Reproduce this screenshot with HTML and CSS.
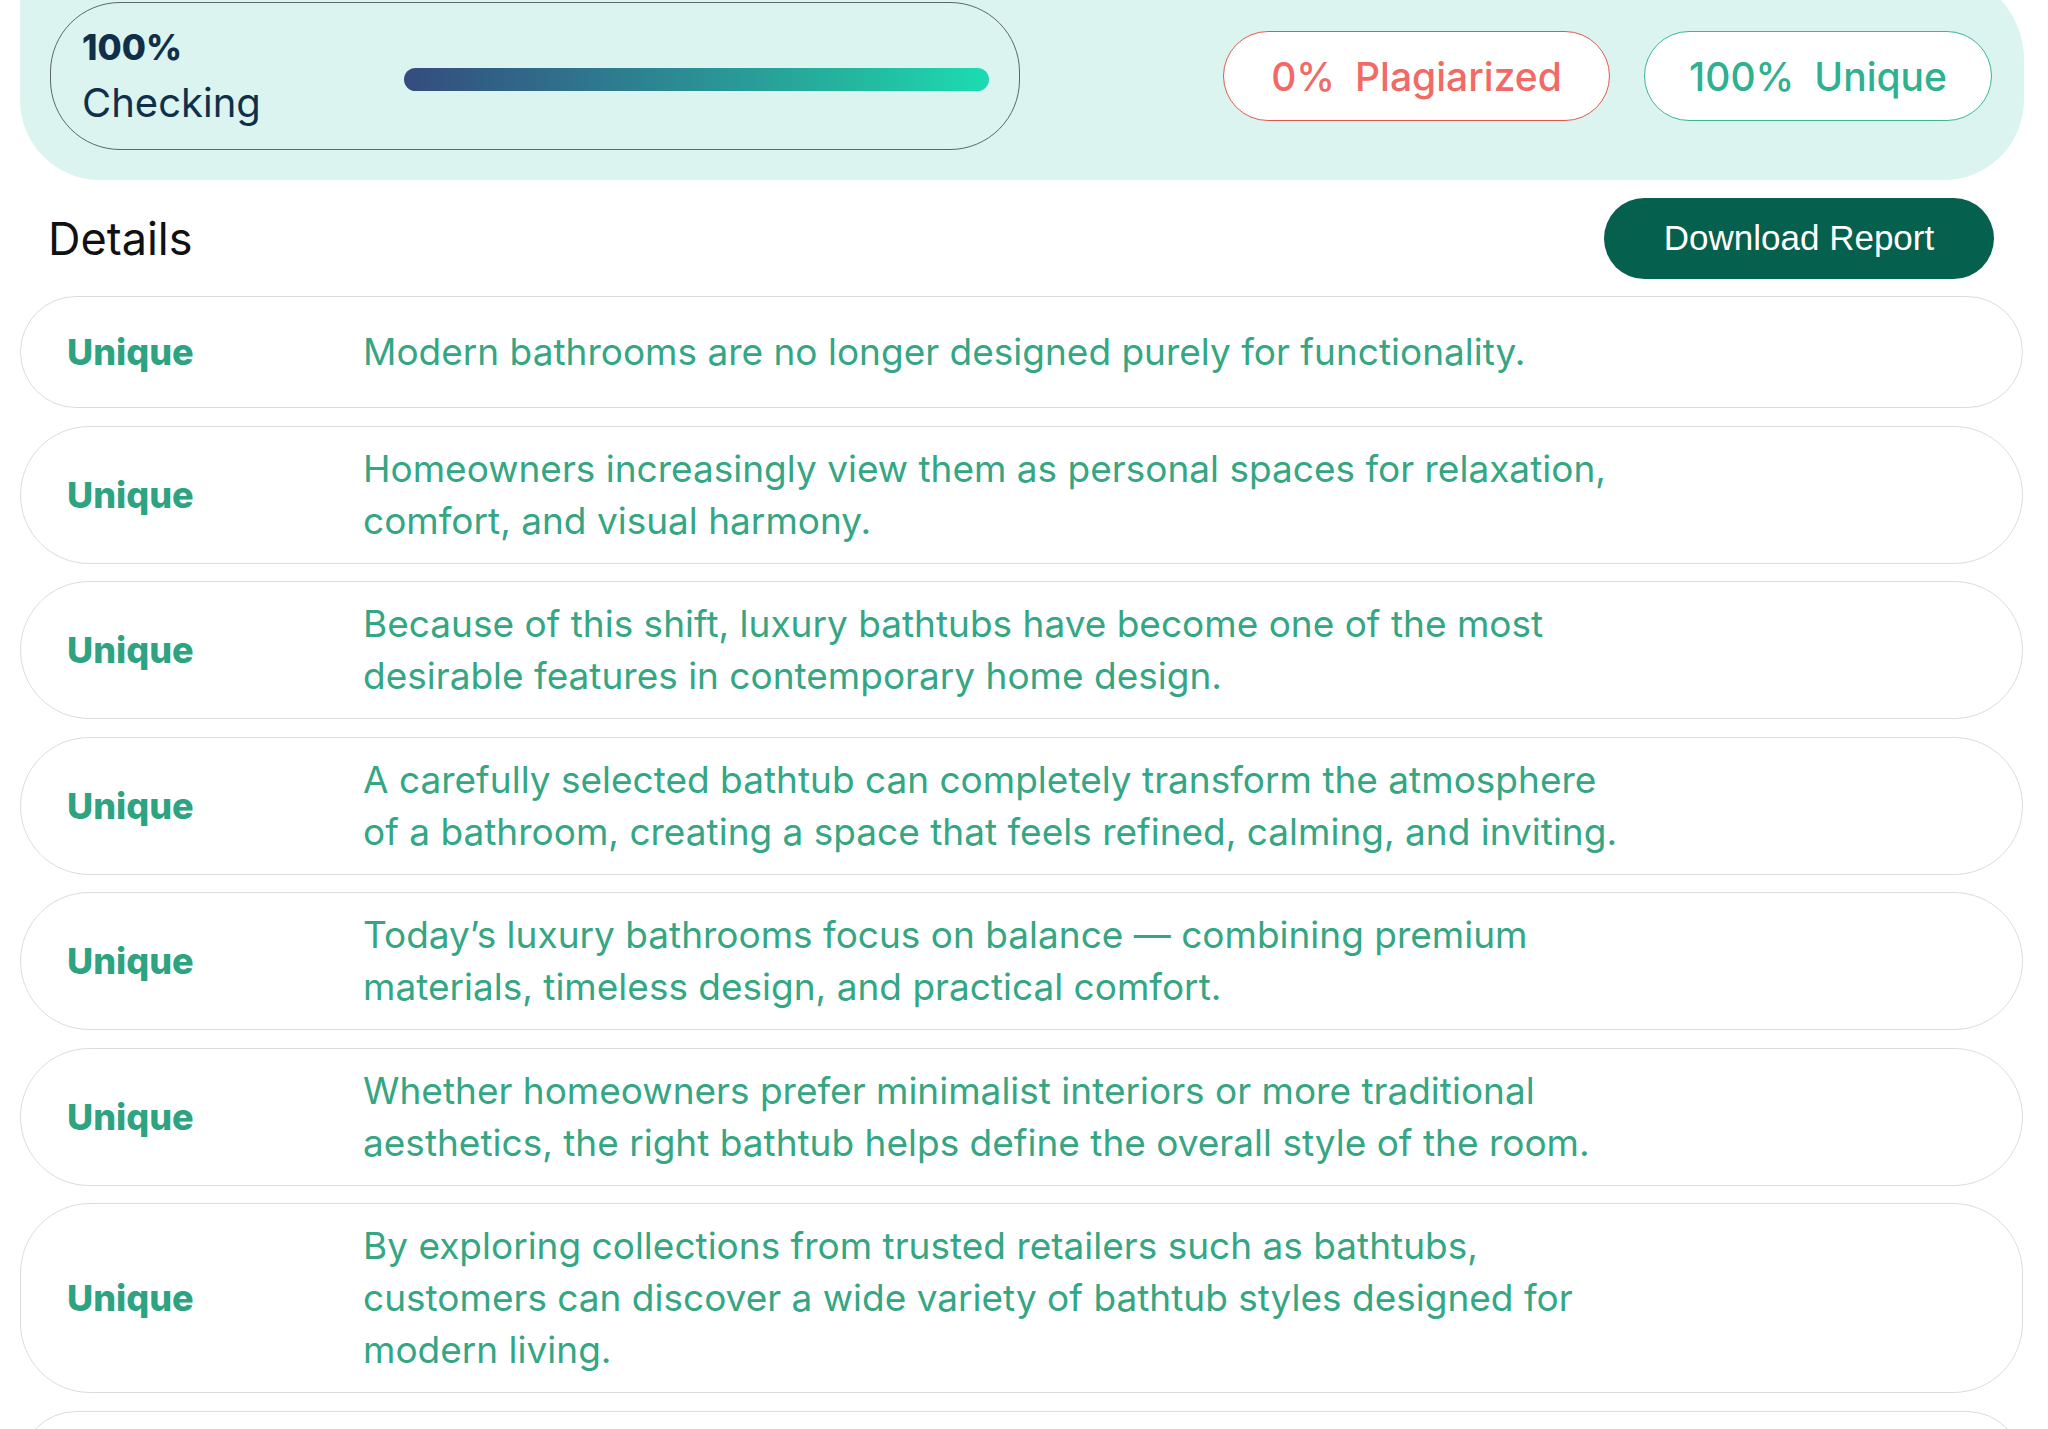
FILE: index.html
```html
<!DOCTYPE html>
<html lang="en">
<head>
    <meta charset="UTF-8">
    <title>Plagiarism Check Result</title>
    <link rel="stylesheet" href="styles.css">
</head>
<body>
    <div class="summary">
        <div class="progress-box">
            <div class="progress-text">
                <div class="percent">100%</div>
                <div class="status">Checking</div>
            </div>
            <div class="bar"></div>
        </div>
        <div class="scores">
            <div class="score plag"><span>0%</span><span>Plagiarized</span></div>
            <div class="score uniq"><span>100%</span><span>Unique</span></div>
        </div>
    </div>

    <div class="details-head">
        <h2>Details</h2>
        <button class="download">Download Report</button>
    </div>

    <div class="rows">
        <div class="row">
            <div class="label">Unique</div>
            <div class="sentence">Modern bathrooms are no longer designed purely for functionality.</div>
        </div>
        <div class="row">
            <div class="label">Unique</div>
            <div class="sentence">Homeowners increasingly view them as personal spaces for relaxation, comfort, and visual harmony.</div>
        </div>
        <div class="row">
            <div class="label">Unique</div>
            <div class="sentence">Because of this shift, luxury bathtubs have become one of the most desirable features in contemporary home design.</div>
        </div>
        <div class="row">
            <div class="label">Unique</div>
            <div class="sentence">A carefully selected bathtub can completely transform the atmosphere of a bathroom, creating a space that feels refined, calming, and inviting.</div>
        </div>
        <div class="row">
            <div class="label">Unique</div>
            <div class="sentence">Today’s luxury bathrooms focus on balance — combining premium materials, timeless design, and practical comfort.</div>
        </div>
        <div class="row">
            <div class="label">Unique</div>
            <div class="sentence">Whether homeowners prefer minimalist interiors or more traditional aesthetics, the right bathtub helps define the overall style of the room.</div>
        </div>
        <div class="row">
            <div class="label">Unique</div>
            <div class="sentence">By exploring collections from trusted retailers such as bathtubs, customers can discover a wide variety of bathtub styles designed for modern living.</div>
        </div>
        <!-- next row, only its top edge is in view -->
        <div class="row"></div>
    </div>
</body>
</html>
```
FILE: styles.css
```css
body{
    margin: 0;
    background: #fff;
    font-family: Inter, "Noto Sans", sans-serif;
    overflow: hidden;
}

/* top summary panel */
.summary{
    margin: -30px 24px 0 20px;
    padding: 32px 32px 30px 30px;
    background: #dbf4ef;
    border-radius: 0 90px 80px 80px;
    display: flex;
    align-items: center;
    justify-content: space-between;
}

.progress-box{
    width: 970px;
    height: 148px;
    box-sizing: border-box;
    border: 1.5px solid #5c666c;
    border-radius: 70px;
    padding: 23px 30px 0 31px;
    display: flex;
    align-items: flex-start;
}

.progress-text{
    width: 322px;
    flex: none;
    color: #10304a;
}

.percent{
    font-size: 35px;
    line-height: 42px;
    font-weight: 800;
}

.status{
    font-size: 40px;
    line-height: 56px;
    margin-top: 7px;
}

.bar{
    flex: 1;
    height: 23px;
    margin-top: 42px;
    border-radius: 12px;
    background: linear-gradient(to right, #344c7e 0%, #2c8893 45%, #24b49d 75%, #1cdcb1 100%);
}

.scores{
    display: flex;
    gap: 34px;
}

.score{
    height: 90px;
    box-sizing: border-box;
    display: flex;
    align-items: center;
    justify-content: center;
    gap: 20px;
    background: #fff;
    border-radius: 45px;
    font-size: 39px;
    font-weight: 500;
}

.plag{
    width: 387px;
    border: 1.5px solid #e2584e;
    color: #f26a65;
}

.uniq{
    width: 348px;
    border: 1.5px solid #3db596;
    color: #2fb08e;
}

/* details header */
.details-head{
    display: flex;
    align-items: center;
    justify-content: space-between;
    padding: 17px 54px 0 48px;
    height: 99px;
    box-sizing: border-box;
}

.details-head h2{
    margin: 0;
    font-size: 45px;
    font-weight: 400;
    color: #111;
}

.download{
    width: 390px;
    height: 81px;
    border: none;
    border-radius: 41px;
    background: #06604e;
    color: #fff;
    font-family: "Liberation Sans", Arial, sans-serif;
    font-size: 35px;
    cursor: pointer;
}

/* sentence rows */
.rows{
    margin: 17px 25px 0 20px;
    display: flex;
    flex-direction: column;
    gap: 17.5px;
}

.row{
    min-height: 112px;
    box-sizing: border-box;
    padding: 16px 40px 16px 46px;
    border: 1.5px solid #dcdcdc;
    border-radius: 70px;
    display: flex;
    align-items: center;
}

.label{
    width: 296px;
    flex: none;
    font-size: 36px;
    font-weight: 800;
    color: #2ea381;
}

.sentence{
    max-width: 1268px;
    font-size: 37px;
    line-height: 52px;
    color: #35a683;
}
```
